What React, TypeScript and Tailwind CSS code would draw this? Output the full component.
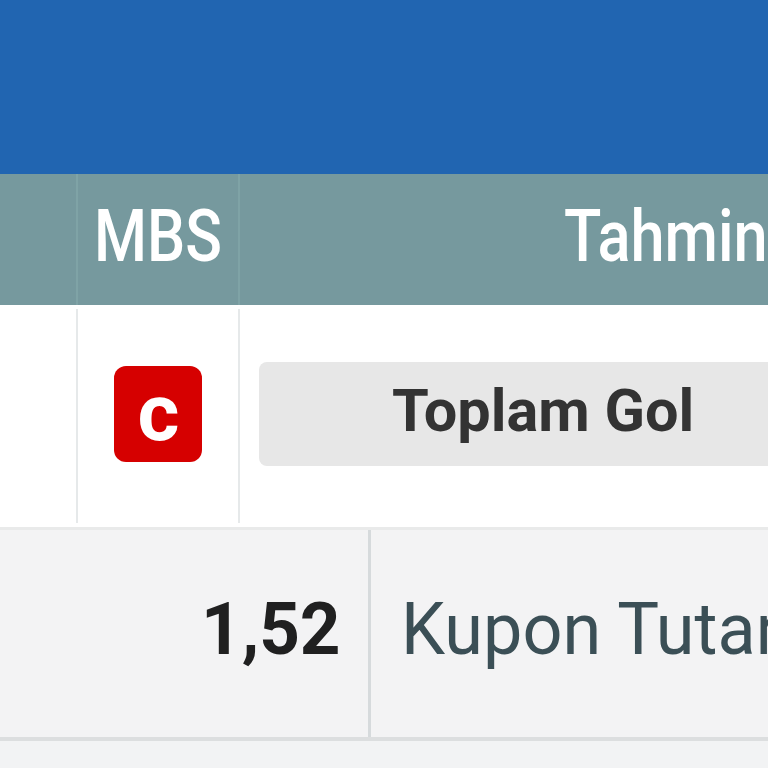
export default function App() {
    return (
        <div className="flex h-[768px] w-[768px] flex-col overflow-hidden bg-[#f2f3f4] font-['Roboto','Liberation_Sans',sans-serif]">
            <div className="h-[174px] shrink-0 bg-[#2165b1]" />

            {/* Column headings */}
            <div className="flex h-[131px] shrink-0 bg-[#76999e] text-white">
                <div className="w-[78px] shrink-0 border-r-2 border-[#7fa3a6]" />
                <div className="w-[162px] shrink-0 border-r-2 border-[#7fa3a6] pt-[22px] pl-[16px]">
                    <span className="block origin-left scale-x-[0.83] text-[73px] leading-[80px] font-medium">MBS</span>
                </div>
                <div className="pt-[22px] pl-[324px]">
                    <span className="block origin-left scale-x-[0.84] text-[73px] leading-[80px] font-medium">Tahmin</span>
                </div>
            </div>

            {/* Bet row */}
            <div className="flex h-[222px] shrink-0 bg-white py-1">
                <div className="w-[78px] shrink-0 border-r-2 border-[#e6e9ea]" />
                <div className="w-[162px] shrink-0 border-r-2 border-[#e6e9ea] pt-[57px] pl-[36px]">
                    <div className="flex h-[96px] w-[88px] justify-center rounded-[12px] bg-[#d60000] pt-[7px] pl-[2px] text-[79px] leading-[80px] font-bold text-white">
                        <span className="block scale-x-[1.02]">c</span>
                    </div>
                </div>
                <div className="pt-[53px] pl-[19px]">
                    <div className="h-[104px] w-[520px] rounded-[8px] bg-[#e7e7e7] pt-[14px] pl-[133px]">
                        <span className="block origin-left scale-x-[0.99] text-[60px] leading-[70px] font-bold whitespace-nowrap text-[#333]">Toplam Gol</span>
                    </div>
                </div>
            </div>

            {/* Totals */}
            <div className="flex h-[214px] shrink-0 border-t-3 border-b-4 border-t-[#e9eaea] border-b-[#dcdedf] bg-[#f3f3f4]">
                <div className="w-[371px] shrink-0 border-r-3 border-[#d6dadc] pt-[60px] pl-[201px]">
                    <span className="block origin-left scale-x-[0.985] text-[72px] leading-[80px] font-bold text-[#202020]">1,52</span>
                </div>
                <div className="pt-[60px] pl-[30px]">
                    <span className="block origin-left scale-x-[0.975] text-[72px] leading-[80px] whitespace-nowrap text-[#3b4f56]">Kupon Tutar</span>
                </div>
            </div>
        </div>
    )
}
